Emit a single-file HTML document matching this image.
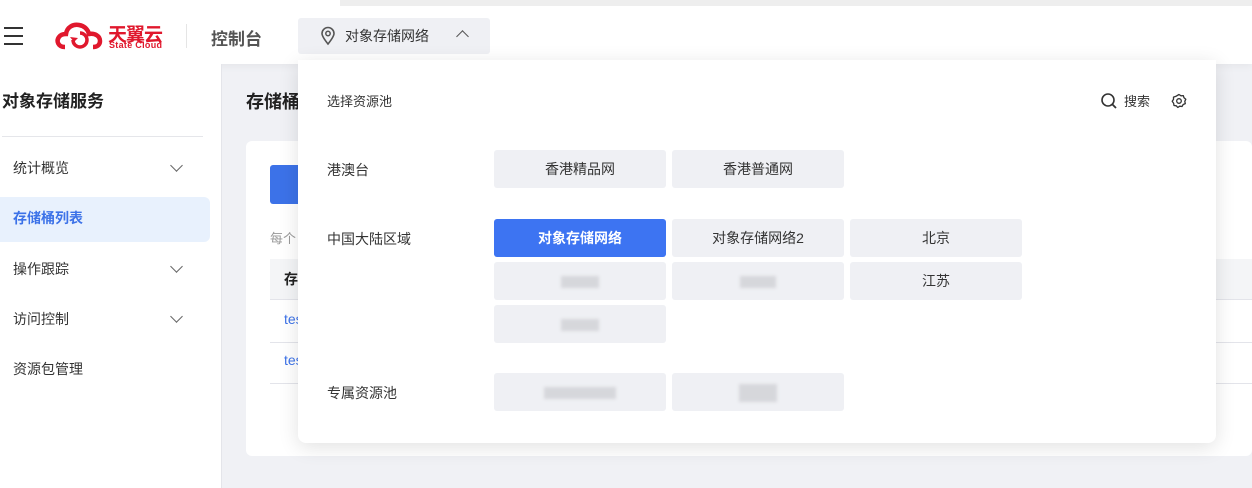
<!DOCTYPE html>
<html><head><meta charset="utf-8">
<style>
*{box-sizing:border-box;margin:0;padding:0}
body{width:1252px;height:488px;overflow:hidden;background:#f0f1f5;font-family:"Liberation Sans","Noto Sans CJK SC",sans-serif;position:relative;color:#333}
.abs{position:absolute}
.top{left:0;top:0;width:1252px;height:64px;background:#fff;box-shadow:0 2px 8px rgba(0,0,0,0.05)}
.topline{left:340px;top:0;width:912px;height:6px;background:#eee}
.side{left:0;top:64px;width:222px;height:424px;background:#fff;border-right:1px solid #e4e5ea}
.mi{position:absolute;left:13px;font-size:14px;color:#333}
.chev{position:absolute;left:172px;width:9px;height:9px;border-right:1.5px solid #666;border-bottom:1.5px solid #666;transform:rotate(45deg)}
.btn{position:absolute;width:172px;height:38px;background:#eff0f4;border-radius:3px;font-size:14px;color:#333;text-align:center;line-height:38px}
.blur{display:inline-block;height:12px;background:#d6d7db;filter:blur(1.5px);vertical-align:middle}
.lab{position:absolute;left:327px;font-size:14px;color:#333}
</style></head><body>
<div class="abs top"></div>
<div class="abs topline"></div>
<div class="abs" style="left:4px;top:27px;width:19px;height:2px;background:#333"></div>
<div class="abs" style="left:4px;top:35px;width:19px;height:2px;background:#333"></div>
<div class="abs" style="left:4px;top:43px;width:19px;height:2px;background:#333"></div>
<svg class="abs" style="left:55px;top:22px" width="52" height="28" viewBox="0 0 52 28"><path d="M10 25 C3 25 1 19 4 15 C6 12 9 12 11 12 C12 5 18 2 24 3 C30 4 33 8 34 12 C40 11 45 14 45 19 C45 23 42 25 38 25" fill="none" stroke="#e0182d" stroke-width="4.5"/><path d="M18 18 a7 7 0 1 0 7-7" fill="none" stroke="#e0182d" stroke-width="3.5"/><path d="M15 15 l4 5 l4-4z" fill="#e0182d"/></svg>
<div class="abs" style="left:108px;top:20px;font-size:19px;font-weight:bold;color:#e0182d;letter-spacing:-1px">天翼云</div>
<div class="abs" style="left:109px;top:40px;font-size:9px;font-weight:bold;color:#e0182d;letter-spacing:0.3px">State Cloud</div>
<div class="abs" style="left:186px;top:24px;width:1px;height:24px;background:#e5e5e5"></div>
<div class="abs" style="left:211px;top:25px;font-size:17px;font-weight:bold;color:#555">控制台</div>
<div class="abs" style="left:298px;top:18px;width:192px;height:36px;background:#eff0f4;border-radius:3px"></div>
<svg class="abs" style="left:320px;top:26px" width="16" height="20" viewBox="0 0 16 20"><path d="M8 18 C4 13 2 10 2 7.5 A6 6 0 0 1 14 7.5 C14 10 12 13 8 18Z" fill="none" stroke="#555" stroke-width="1.6"/><circle cx="8" cy="7.5" r="2.2" fill="none" stroke="#555" stroke-width="1.5"/></svg>
<div class="abs" style="left:345px;top:26px;font-size:14px;color:#333">对象存储网络</div>
<div class="abs" style="left:458px;top:32px;width:9px;height:9px;border-left:1.6px solid #555;border-top:1.6px solid #555;transform:rotate(45deg)"></div>

<div class="abs side"></div>
<div class="abs" style="left:2px;top:87px;font-size:17px;font-weight:bold;color:#222">对象存储服务</div>
<div class="abs" style="left:2px;top:136px;width:201px;height:1px;background:#e5e6ea"></div>
<div class="mi" style="top:158px">统计概览</div><div class="chev" style="top:161px"></div>
<div class="abs" style="left:0;top:197px;width:210px;height:45px;background:#e8f1fd;border-radius:0 6px 6px 0"></div>
<div class="mi" style="top:208px;color:#3c72e8;font-weight:bold">存储桶列表</div>
<div class="mi" style="top:259px">操作跟踪</div><div class="chev" style="top:262px"></div>
<div class="mi" style="top:309px">访问控制</div><div class="chev" style="top:312px"></div>
<div class="mi" style="top:359px">资源包管理</div>

<div class="abs" style="left:246px;top:88px;font-size:18px;font-weight:bold;color:#222">存储桶</div>
<div class="abs" style="left:246px;top:141px;width:1006px;height:315px;background:#fff;border-radius:6px"></div>
<div class="abs" style="left:270px;top:165px;width:40px;height:39px;background:#3c72e8;border-radius:3px"></div>
<div class="abs" style="left:270px;top:228px;font-size:13px;color:#999">每个</div>
<div class="abs" style="left:270px;top:259px;width:982px;height:41px;background:#f4f5f7;border-bottom:1px solid #e3e4ea"></div>
<div class="abs" style="left:284px;top:269px;font-size:14px;font-weight:bold;color:#222">存</div>
<div class="abs" style="left:270px;top:342px;width:982px;height:1px;background:#e3e4ea"></div>
<div class="abs" style="left:270px;top:383px;width:982px;height:1px;background:#e3e4ea"></div>
<div class="abs" style="left:284px;top:311px;font-size:14px;color:#3c72e8">tes</div>
<div class="abs" style="left:284px;top:352px;font-size:14px;color:#3c72e8">tes</div>

<div class="abs" style="left:298px;top:60px;width:918px;height:383px;background:#fff;border-radius:0 0 8px 8px;box-shadow:0 4px 20px rgba(0,0,0,0.12)"></div>
<div class="abs" style="left:327px;top:91px;font-size:13px;color:#333">选择资源池</div>
<svg class="abs" style="left:1100px;top:92px" width="18" height="18" viewBox="0 0 18 18"><circle cx="8" cy="8" r="6" fill="none" stroke="#333" stroke-width="1.6"/><path d="M12.5 12.5 L16 16" stroke="#333" stroke-width="1.8"/></svg>
<div class="abs" style="left:1124px;top:91px;font-size:13px;color:#333">搜索</div>
<svg class="abs" style="left:1171px;top:93px" width="16" height="16" viewBox="0 0 16 16"><path d="M8 1.5 L10 2.8 L12.3 2.6 L13 4.8 L14.8 6.3 L13.8 8.3 L14.3 10.6 L12.2 11.5 L11 13.5 L8.7 13.2 L6.8 14.5 L5.3 12.8 L3 12.5 L2.6 10.2 L1.2 8.3 L2.5 6.4 L2.5 4.1 L4.7 3.4 Z" fill="none" stroke="#333" stroke-width="1.3" stroke-linejoin="round"/><circle cx="8" cy="8" r="2.3" fill="none" stroke="#333" stroke-width="1.3"/></svg>

<div class="lab" style="top:160px">港澳台</div>
<div class="btn" style="left:494px;top:150px">香港精品网</div>
<div class="btn" style="left:672px;top:150px">香港普通网</div>
<div class="lab" style="top:229px">中国大陆区域</div>
<div class="btn" style="left:494px;top:219px;background:#3d74f2;color:#fff;font-weight:bold">对象存储网络</div>
<div class="btn" style="left:672px;top:219px">对象存储网络2</div>
<div class="btn" style="left:850px;top:219px">北京</div>
<div class="btn" style="left:494px;top:262px"><span class="blur" style="width:38px"></span></div>
<div class="btn" style="left:672px;top:262px"><span class="blur" style="width:36px"></span></div>
<div class="btn" style="left:850px;top:262px">江苏</div>
<div class="btn" style="left:494px;top:305px"><span class="blur" style="width:38px"></span></div>
<div class="lab" style="top:383px">专属资源池</div>
<div class="btn" style="left:494px;top:373px"><span class="blur" style="width:72px"></span></div>
<div class="btn" style="left:672px;top:373px"><span class="blur" style="width:38px;height:18px"></span></div>
</body></html>
